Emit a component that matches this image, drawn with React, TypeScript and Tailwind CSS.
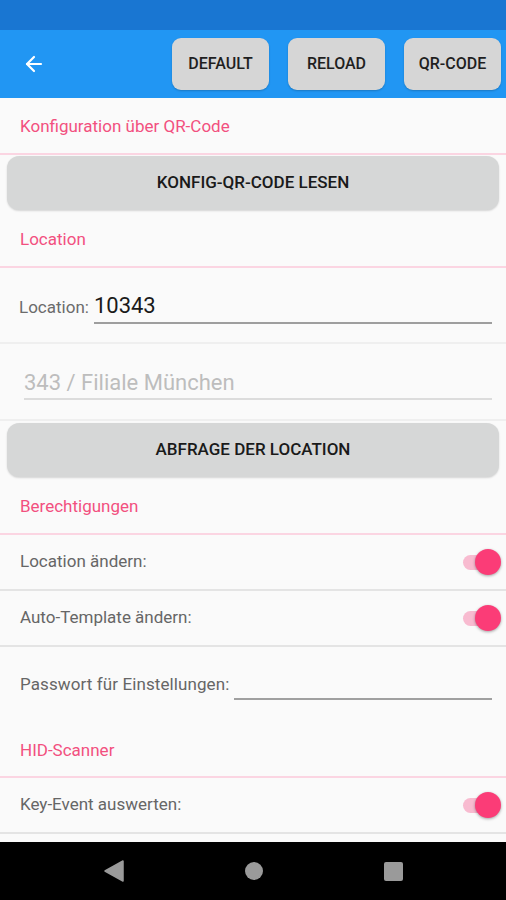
import { ArrowLeft } from "lucide-react";

const font = { fontFamily: "Roboto, 'Noto Sans', sans-serif" };

function ActionButton({ label }: { label: string }) {
  return (
    <button
      type="button"
      className="h-[52px] w-[97px] rounded-[9px] bg-[#d6d6d6] text-[16px] font-medium text-[#1f1f1f] shadow-[0_1px_2px_rgba(0,0,0,0.2)]"
    >
      {label}
    </button>
  );
}

function WideButton({ label }: { label: string }) {
  return (
    <div className="px-[7px]">
      <button
        type="button"
        className="h-[54px] w-full rounded-[12px] bg-[#d6d7d7] text-[17px] font-medium text-[#1a1a1a] shadow-[0_1px_2px_rgba(0,0,0,0.15)]"
      >
        {label}
      </button>
    </div>
  );
}

function Category({ title, h }: { title: string; h: string }) {
  return (
    <div className={`flex items-center border-b-2 border-[#fbd5e2] pl-[20px] pt-[3px] ${h}`}>
      <span className="text-[17px] text-[#f2507f]">{title}</span>
    </div>
  );
}

function Toggle() {
  return (
    <div className="relative h-[26px] w-[42px]">
      <div className="absolute left-[4px] top-[6px] h-[15px] w-[34px] rounded-full bg-[#f8bbd0]" />
      <div className="absolute right-0 top-0 h-[26px] w-[26px] rounded-full bg-[#fb3c77] shadow-[0_1px_3px_rgba(0,0,0,0.35)]" />
    </div>
  );
}

function SwitchRow({ label }: { label: string }) {
  return (
    <div className="flex h-[56px] items-center justify-between border-b-2 border-[#e4e4e4] pl-[20px] pr-[5px]">
      <span className="text-[17px] text-[#666666]">{label}</span>
      <Toggle />
    </div>
  );
}

export default function App() {
  return (
    <div className="flex h-[900px] w-[506px] flex-col bg-[#fafafa]" style={font}>
      <div className="h-[30px] bg-[#1976d2]" />
      <div className="flex h-[68px] items-center bg-[#2196f3] pr-[5px]">
        <ArrowLeft className="ml-[22px] text-white" size={24} strokeWidth={2.2} />
        <div className="ml-auto flex gap-[19px]">
          <ActionButton label="DEFAULT" />
          <ActionButton label="RELOAD" />
          <ActionButton label="QR-CODE" />
        </div>
      </div>

      <div className="flex flex-1 flex-col overflow-hidden">
        <Category title="Konfiguration über QR-Code" h="h-[57px]" />
        <div className="h-[1px]" />
        <WideButton label="KONFIG-QR-CODE LESEN" />
        <Category title="Location" h="h-[58px]" />

        <div className="flex h-[76px] items-center border-b-2 border-[#efefef] pl-[19px] pr-[14px]">
          <span className="pt-[6px] text-[17px] text-[#6b6b6b]">Location:</span>
          <div className="ml-[5px] flex-1 border-b-2 border-[#9e9e9e] pt-[6px] pb-[2px]">
            <span className="text-[22px] leading-[28px] text-[#1a1a1a]">10343</span>
          </div>
        </div>

        <div className="flex h-[77px] items-center border-b-2 border-[#efefef] pl-[24px] pr-[14px]">
          <div className="flex-1 border-b-2 border-[#dcdcdc] pt-[4px]">
            <span className="text-[22px] leading-[30px] text-[#bdbdbd]">343 / Filiale München</span>
          </div>
        </div>

        <div className="h-[2px]" />
        <WideButton label="ABFRAGE DER LOCATION" />
        <Category title="Berechtigungen" h="h-[58px]" />
        <SwitchRow label="Location ändern:" />
        <SwitchRow label="Auto-Template ändern:" />

        <div className="flex h-[76px] items-center pl-[20px] pr-[14px]">
          <span className="text-[17px] tracking-[0.1px] text-[#666666]">Passwort für Einstellungen:</span>
          <div className="ml-[5px] h-[22px] flex-1 translate-y-[4px] border-b-2 border-[#a0a0a0]" />
        </div>

        <Category title="HID-Scanner" h="h-[55px]" />
        <SwitchRow label="Key-Event auswerten:" />
      </div>

      <div className="flex h-[58px] items-center justify-center gap-[121px] bg-black">
        <svg width="20" height="22" viewBox="0 0 20 22">
          <path d="M19 1 L19 21 L1 11 Z" fill="#9a9a9a" strokeLinejoin="round" stroke="#9a9a9a" strokeWidth="1.5" />
        </svg>
        <div className="h-[18px] w-[18px] rounded-full bg-[#9a9a9a]" />
        <div className="h-[19px] w-[19px] rounded-[2px] bg-[#9a9a9a]" />
      </div>
    </div>
  );
}
